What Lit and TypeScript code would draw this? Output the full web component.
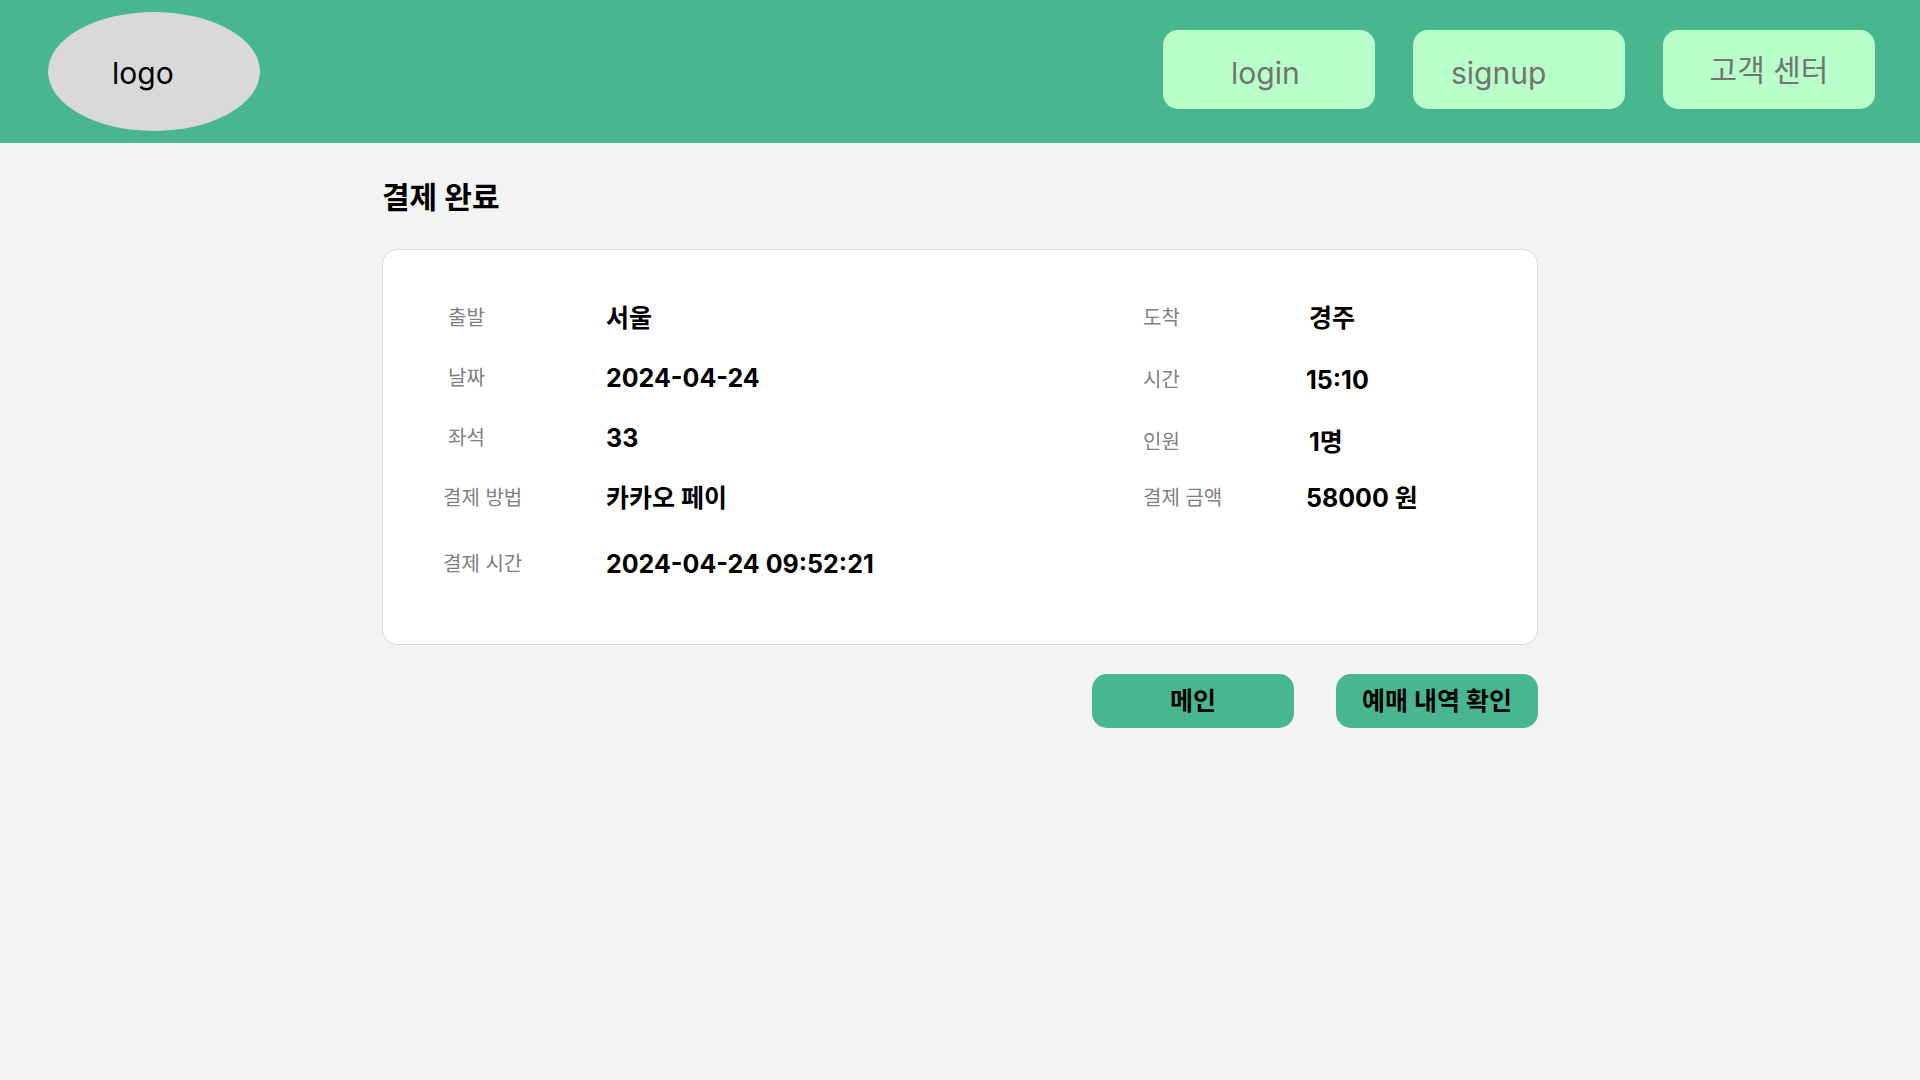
import { LitElement, html, css } from "lit";
import { customElement, property } from "lit/decorators.js";
import { classMap } from "lit/directives/class-map.js";

interface Item {
  label: string;
  value: string;
  inset?: boolean;
}

interface Group {
  kind: "trip" | "payment";
  items: Item[];
}

const departure: Group[] = [
  {
    kind: "trip",
    items: [
      { label: "출발", value: "서울" },
      { label: "날짜", value: "2024-04-24" },
      { label: "좌석", value: "33" },
    ],
  },
  {
    kind: "payment",
    items: [
      { label: "결제 방법", value: "카카오 페이" },
      { label: "결제 시간", value: "2024-04-24 09:52:21" },
    ],
  },
];

const arrival: Group[] = [
  {
    kind: "trip",
    items: [
      { label: "도착", value: "경주", inset: true },
      { label: "시간", value: "15:10" },
      { label: "인원", value: "1명", inset: true },
    ],
  },
  {
    kind: "payment",
    items: [{ label: "결제 금액", value: "58000 원" }],
  },
];

@customElement("site-header")
class SiteHeader extends LitElement {
  static styles = css`
    :host {
      display: block;
      background: #48b790;
    }
    .bar {
      display: flex;
      align-items: flex-start;
      justify-content: space-between;
      padding: 12px 45px 12px 48px;
    }
    .logo,
    .button {
      box-sizing: border-box;
      width: 212px;
      font: 400 30px/36px Inter, "Noto Sans CJK KR", sans-serif;
    }
    .logo {
      height: 119px;
      padding: 43px 0 0 64px;
      border-radius: 50%;
      background: #d9d9d9;
      color: #000;
      text-decoration: none;
    }
    .nav {
      display: flex;
      gap: 38px;
      padding-top: 18px;
    }
    .button {
      height: 79px;
      padding: 0;
      border: 0;
      border-radius: 15px;
      background: #b9ffc9;
      color: #737373;
      cursor: pointer;
    }
    .login,
    .signup {
      padding-top: 7px;
      text-align: left;
    }
    .login {
      padding-left: 68px;
    }
    .signup {
      padding-left: 38px;
    }
  `;

  render() {
    return html`
      <header class="bar">
        <a class="logo" href="#">logo</a>
        <nav class="nav">
          <button class="button login" type="button">login</button>
          <button class="button signup" type="button">signup</button>
          <button class="button" type="button">고객 센터</button>
        </nav>
      </header>
    `;
  }
}

@customElement("detail-column")
class DetailColumn extends LitElement {
  @property({ attribute: false }) groups: Group[] = [];
  @property({ reflect: true }) side = "departure";

  static styles = css`
    :host {
      display: block;
    }
    .group {
      display: grid;
      margin: 0;
    }
    .row {
      display: grid;
      grid-template-columns: 163px 1fr;
      align-items: center;
      height: 30px;
    }
    .label {
      color: #808080;
      font-size: 20px;
      line-height: 30px;
    }
    .value {
      margin: 0;
      font-size: 25px;
      font-weight: 700;
      line-height: 30px;
      white-space: nowrap;
    }
    .inset {
      padding-left: 3px;
    }
    :host([side="departure"]) .trip {
      gap: 30px;
    }
    :host([side="departure"]) .trip .label {
      padding-left: 5px;
    }
    :host([side="departure"]) .payment {
      gap: 36px;
      margin-top: 30px;
    }
    :host([side="arrival"]) .trip {
      gap: 32px;
    }
    :host([side="arrival"]) .payment {
      margin-top: 26px;
    }
  `;

  render() {
    return this.groups.map(
      (group) => html`
        <dl class="group ${group.kind}">
          ${group.items.map(
            (item) => html`
              <div class="row">
                <dt class="label">${item.label}</dt>
                <dd class=${classMap({ value: true, inset: !!item.inset })}>${item.value}</dd>
              </div>
            `
          )}
        </dl>
      `
    );
  }
}

@customElement("app-root")
class AppRoot extends LitElement {
  static styles = css`
    :host {
      display: block;
      min-height: 100vh;
      background: #f3f3f3;
      color: #000;
      font-family: Inter, "Noto Sans CJK KR", sans-serif;
    }
    .main {
      box-sizing: border-box;
      max-width: 1156px;
      margin: 0 auto;
      padding: 36px 0;
    }
    .title {
      margin: 0;
      font-size: 30px;
      font-weight: 700;
      line-height: 36px;
    }
    .card {
      display: grid;
      grid-template-columns: 700fr 334fr;
      margin-top: 34px;
      padding: 53px 60px 65px;
      border: 1px solid #d9d9d9;
      border-radius: 15px;
      background: #fff;
    }
    .actions {
      display: flex;
      justify-content: flex-end;
      gap: 42px;
      margin-top: 29px;
    }
    .action {
      width: 202px;
      height: 54px;
      padding: 0;
      border: 0;
      border-radius: 15px;
      background: #48b790;
      color: #000;
      font: 700 25px/30px Inter, "Noto Sans CJK KR", sans-serif;
      white-space: nowrap;
      cursor: pointer;
    }
  `;

  render() {
    return html`
      <site-header></site-header>
      <main class="main">
        <h1 class="title">결제 완료</h1>
        <section class="card">
          <detail-column side="departure" .groups=${departure}></detail-column>
          <detail-column side="arrival" .groups=${arrival}></detail-column>
        </section>
        <div class="actions">
          <button class="action" type="button">메인</button>
          <button class="action" type="button">예매 내역 확인</button>
        </div>
      </main>
    `;
  }
}
